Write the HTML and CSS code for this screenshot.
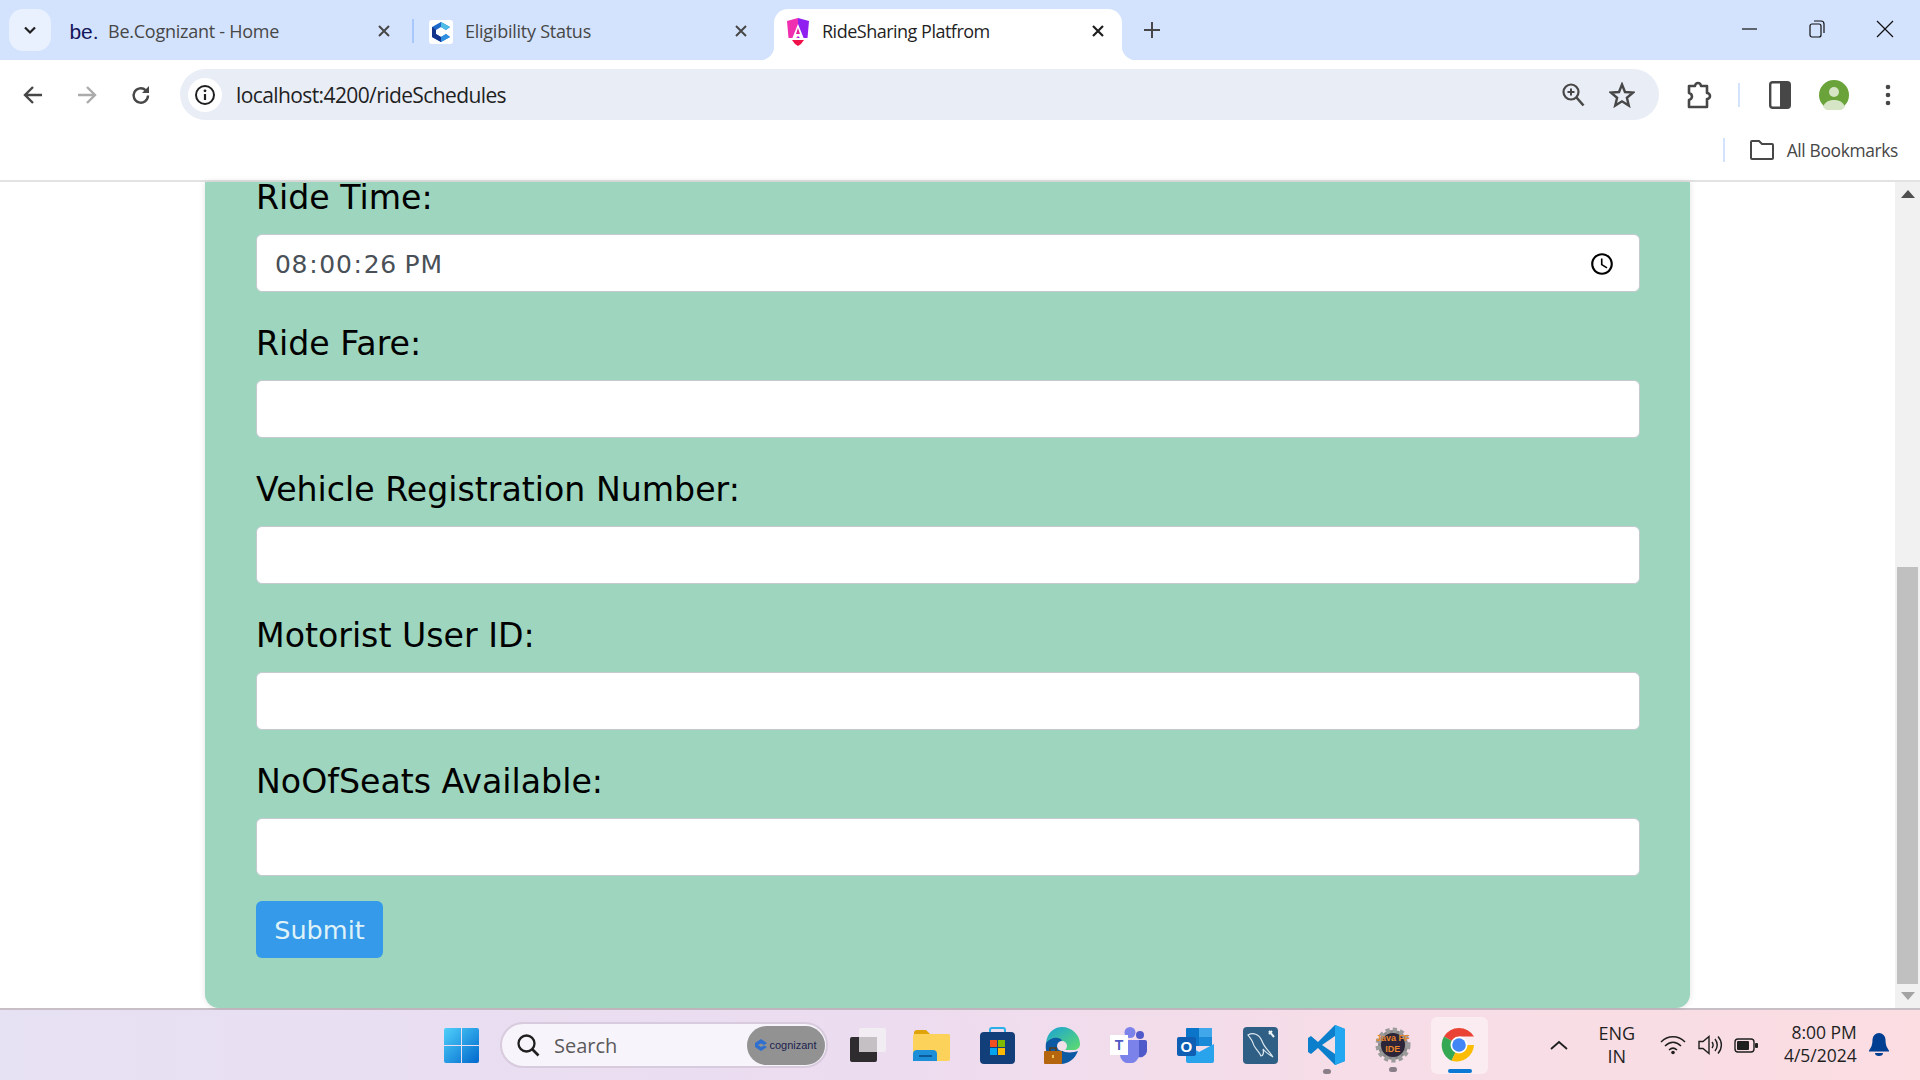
FILE: index.html
```html
<!DOCTYPE html>
<html lang="en">
<head>
    <meta charset="UTF-8">
    <title>RideSharing Platfrom</title>
    <link rel="stylesheet" href="styles.css">
</head>
<body>
<div class="tabstrip">
    <button class="tab-search"><svg width="16" height="16" viewBox="0 0 16 16"><path d="M3 5.500l5 5 5-5" fill="none" stroke="#1f1f1f" stroke-width="2.200"/></svg></button>
    <div class="tab">
        <span class="favicon be-logo">be.</span>
        <span class="tab-title">Be.Cognizant - Home</span>
        <svg class="tab-close" width="14" height="14" viewBox="0 0 14 14"><path d="M2 2l10 10M12 2L2 12" stroke="#474747" stroke-width="2"/></svg>
    </div>
    <span class="tab-sep"></span>
    <div class="tab">
        <span class="favicon">
            <svg width="24" height="24" viewBox="0 0 24 24"><rect width="24" height="24" rx="3" fill="#fff"/><path d="M12 2l9 5-4 3-5-3-5 3v4l5 3 5-3 4 3-9 5-9-5V7z" fill="#1b68c8"/><path d="M12 2l9 5-4 3-5-3z" fill="#4fbde8"/><path d="M3 7l4 3v4l5 3v5l-9-5z" fill="#14348c"/><path d="M17 14l4 3-9 5v-5z" fill="#2f8fe0"/></svg>
        </span>
        <span class="tab-title">Eligibility Status</span>
        <svg class="tab-close" width="14" height="14" viewBox="0 0 14 14"><path d="M2 2l10 10M12 2L2 12" stroke="#474747" stroke-width="2"/></svg>
    </div>
    <div class="tab tab-active">
        <span class="favicon">
            <svg width="24" height="30" viewBox="0 0 24 30"><path d="M12 1L1 4l1.500 17L12 21z" fill="#f02fb0"/><path d="M12 1l11 3-1.500 17L12 21z" fill="#8f20f0"/><path d="M12 7l-6 15h3l3-3 3 3h3z" fill="#fff"/><path d="M12 11l-2 6h4z" fill="#e8209a"/><path d="M6 23h12l-3 4-3 2-3-2z" fill="#f0104a"/></svg>
        </span>
        <span class="tab-title">RideSharing Platfrom</span>
        <svg class="tab-close" width="14" height="14" viewBox="0 0 14 14"><path d="M2 2l10 10M12 2L2 12" stroke="#1f1f1f" stroke-width="2.200"/></svg>
    </div>
    <svg class="new-tab" width="18" height="18" viewBox="0 0 18 18"><path d="M9 1v16M1 9h16" stroke="#474747" stroke-width="2"/></svg>
    <div class="win-controls">
        <svg width="18" height="18" viewBox="0 0 18 18"><path d="M2 9h15" stroke="#111" stroke-width="1.200"/></svg>
        <svg width="18" height="20" viewBox="0 0 18 20"><rect x="2" y="5" width="11" height="13" rx="2" fill="none" stroke="#111" stroke-width="1.200"/><path d="M6 2h7a3 3 0 0 1 3 3v9" fill="none" stroke="#111" stroke-width="1.200"/></svg>
        <svg width="18" height="18" viewBox="0 0 18 18"><path d="M1 1l16 16M17 1L1 17" stroke="#111" stroke-width="1.200"/></svg>
    </div>
</div>

<div class="toolbar">
    <button class="nav-btn"><svg width="22" height="22" viewBox="0 0 22 22"><path d="M20 11H4M11 3l-8 8 8 8" fill="none" stroke="#474747" stroke-width="2.400"/></svg></button>
    <button class="nav-btn"><svg width="22" height="22" viewBox="0 0 22 22"><path d="M2 11h16M11 3l8 8-8 8" fill="none" stroke="#ababab" stroke-width="2.400"/></svg></button>
    <button class="nav-btn"><svg width="22" height="22" viewBox="0 0 22 22"><path d="M18 11.500a7.200 7.200 0 1 1-2.200-5.200" fill="none" stroke="#474747" stroke-width="2.400"/><path d="M19 2v7h-7z" fill="#474747"/></svg></button>
    <div class="omnibox">
        <span class="site-info"><svg width="22" height="22" viewBox="0 0 22 22"><circle cx="11" cy="11" r="9" fill="none" stroke="#1f1f1f" stroke-width="2"/><path d="M11 10v6" stroke="#1f1f1f" stroke-width="2.200"/><circle cx="11" cy="6.800" r="1.400" fill="#1f1f1f"/></svg></span>
        <span class="url">localhost:4200/rideSchedules</span>
        <svg class="omni-icon" width="24" height="26" viewBox="0 0 24 26"><circle cx="10" cy="10" r="7.500" fill="none" stroke="#474747" stroke-width="2.200"/><path d="M15.500 15.500l7 8" stroke="#474747" stroke-width="2.600"/><path d="M10 6.500v7M6.500 10h7" stroke="#474747" stroke-width="2"/></svg>
        <svg class="omni-icon" width="26" height="26" viewBox="0 0 26 26"><path d="M13 2.500l3 7.500 8 .6-6.100 5.200 1.900 7.800L13 19.300l-6.800 4.300 1.900-7.800L2 10.600l8-.6z" fill="none" stroke="#474747" stroke-width="2.400"/></svg>
    </div>
    <svg class="ext-icon" width="26" height="30" viewBox="0 0 26 30"><path d="M3 6h6a3 3 0 0 1 6 0h6v7a3 3 0 0 1 0 6v8H3v-7a4 4 0 0 0 3-3.500A4 4 0 0 0 3 13z" fill="none" stroke="#474747" stroke-width="2.600" stroke-linejoin="round"/></svg>
    <span class="bar-sep"></span>
    <svg class="side-icon" width="22" height="28" viewBox="0 0 22 28"><rect x="1.200" y="1.200" width="19.600" height="25.600" rx="2.500" fill="#fff" stroke="#474747" stroke-width="2.400"/><path d="M11 1h8a2 2 0 0 1 2 2v22a2 2 0 0 1-2 2h-8z" fill="#474747"/></svg>
    <span class="avatar"><svg width="30" height="30" viewBox="0 0 30 30"><circle cx="15" cy="15" r="15" fill="#69a339"/><circle cx="15" cy="12" r="5" fill="#d5e5c5"/><path d="M4 27c2-6 7-7 11-7s9 1 11 7a15 15 0 0 1-22 0z" fill="#d5e5c5"/></svg></span>
    <svg class="menu-icon" width="6" height="22" viewBox="0 0 6 22"><circle cx="3" cy="3" r="2.300" fill="#474747"/><circle cx="3" cy="11" r="2.300" fill="#474747"/><circle cx="3" cy="19" r="2.300" fill="#474747"/></svg>
</div>

<div class="bookmarks">
    <span class="bar-sep"></span>
    <svg width="26" height="22" viewBox="0 0 26 22"><path d="M2 3a1 1 0 0 1 1-1h7l3 3h10a1 1 0 0 1 1 1v13a1 1 0 0 1-1 1H3a1 1 0 0 1-1-1z" fill="none" stroke="#474747" stroke-width="2"/></svg>
    <span class="bookmarks-label">All Bookmarks</span>
</div>

<div class="page">
    <div class="page-main">
        <form class="ride-form">
            <div class="field">
                <label for="rideTime">Ride Time:</label>
                <input id="rideTime" type="time" step="1" value="20:00:26">
            </div>
            <div class="field">
                <label for="rideFare">Ride Fare:</label>
                <input id="rideFare" type="text">
            </div>
            <div class="field">
                <label for="vehicleReg">Vehicle Registration Number:</label>
                <input id="vehicleReg" type="text">
            </div>
            <div class="field">
                <label for="motoristId">Motorist User ID:</label>
                <input id="motoristId" type="text">
            </div>
            <div class="field">
                <label for="seats">NoOfSeats Available:</label>
                <input id="seats" type="text">
            </div>
            <button type="button" class="submit-btn">Submit</button>
        </form>
    </div>
    <div class="scrollbar">
        <svg class="scroll-arrow" width="14" height="8" viewBox="0 0 14 8"><path d="M7 0l7 8H0z" fill="#505050"/></svg>
        <div class="scroll-track"><div class="scroll-thumb"></div></div>
        <svg class="scroll-arrow" width="14" height="8" viewBox="0 0 14 8"><path d="M0 0h14L7 8z" fill="#a3a3a3"/></svg>
    </div>
</div>

<div class="taskbar">
    <svg class="win-logo" width="35" height="35" viewBox="0 0 35 35">
        <defs><linearGradient id="winGrad" x1="0" y1="0" x2="1" y2="1"><stop offset="0" stop-color="#4fd0fb"/><stop offset="1" stop-color="#0068cc"/></linearGradient></defs>
        <path d="M2 0h15v17H0V2a2 2 0 0 1 2-2zM18 0h15a2 2 0 0 1 2 2v15H18zM0 18h17v17H2a2 2 0 0 1-2-2zM18 18h17v15a2 2 0 0 1-2 2H18z" fill="url(#winGrad)"/>
    </svg>
    <div class="search-box">
        <svg width="24" height="24" viewBox="0 0 24 24"><circle cx="10.500" cy="10.500" r="8" fill="none" stroke="#1f1f1f" stroke-width="2.300"/><path d="M16.500 16.500l6 6" stroke="#1f1f1f" stroke-width="2.600"/></svg>
        <span class="search-text">Search</span>
        <span class="search-badge">
            <svg width="12" height="12" viewBox="0 0 12 12"><path d="M6 0l6 4-3 2-3-1.500L3 6l3 2 3-1.500L12 8l-6 4-6-4V4z" fill="#2f6fd0"/></svg>
            <span class="badge-text">cognizant</span>
        </span>
    </div>
    <svg class="task-view" width="36" height="34" viewBox="0 0 36 34"><rect x="0" y="9" width="27" height="25" rx="2" fill="#2e2c2e"/><rect x="9" y="0" width="27" height="24" rx="2" fill="#f2eef2" fill-opacity=".92"/><rect x="9" y="9" width="18" height="15" fill="#c4c0c4"/></svg>
    <svg class="tb-icon tb-folder" width="37" height="32" viewBox="0 0 37 32"><path d="M1 4a3 3 0 0 1 3-3h9l4 4h17a3 3 0 0 1 3 3v3H1z" fill="#e0a30a"/><rect x="0" y="5" width="37" height="27" rx="2" fill="#fcd25a"/><path d="M0 32V25a4 4 0 0 1 4-4h16a4 4 0 0 1 4 4v7z" fill="#1d8fd8"/><rect x="6" y="26" width="13" height="2" fill="#0d5a99"/></svg>
    <svg class="tb-icon" width="35" height="37" viewBox="0 0 35 37"><path d="M10 6V3a2 2 0 0 1 2-2h11a2 2 0 0 1 2 2v3" fill="none" stroke="#29b0e8" stroke-width="2"/><rect x="0" y="5" width="35" height="32" rx="4" fill="#123f7a"/><rect x="10" y="13" width="7" height="7" fill="#f25022"/><rect x="18" y="13" width="7" height="7" fill="#7fba00"/><rect x="10" y="21" width="7" height="7" fill="#00a4ef"/><rect x="18" y="21" width="7" height="7" fill="#ffb900"/></svg>
    <svg class="tb-icon" width="36" height="37" viewBox="0 0 36 37">
        <defs><linearGradient id="edgeGrad" x1="0" y1="0" x2="1" y2="1"><stop offset="0" stop-color="#1aa1d8"/><stop offset="1" stop-color="#5edc6c"/></linearGradient></defs>
        <path d="M2 16C3 6 10 0 18 0c10 0 18 8 18 17 0 4-3 6-7 6h-8c1-4-1-9-6-9-6 0-11 1-13 2z" fill="url(#edgeGrad)"/>
        <path d="M2 16c3-4 8-6 12-5 5 1 4 3 2 6-1 3 1 7 5 8 5 1 10 0 13-1-3 8-10 13-17 13S0 30 2 16z" fill="#0c59a4"/>
        <circle cx="18" cy="19" r="5" fill="#f3dfe8"/>
        <rect x="0" y="24" width="18" height="13" rx="1" fill="#b5650e"/><path d="M6 24v-3h6v3" fill="none" stroke="#5a3a10" stroke-width="1.500"/><rect x="8" y="28" width="2" height="3" fill="#f0c050"/>
    </svg>
    <svg class="tb-icon" width="37" height="36" viewBox="0 0 37 36"><circle cx="20" cy="5.500" r="5.500" fill="#7b83eb"/><circle cx="30" cy="8" r="4" fill="#5059c9"/><path d="M26 13h9a2 2 0 0 1 2 2v9a7 7 0 0 1-11 5z" fill="#5059c9"/><path d="M10 13h19v15a9 8 0 0 1-19 0z" fill="#7b83eb"/></svg>
    <span class="teams-t">T</span>
    <svg class="tb-icon" width="37" height="36" viewBox="0 0 37 36"><rect x="9" y="1" width="26" height="18" rx="1" fill="#0a75c9"/><rect x="22" y="1" width="13" height="9" fill="#40a8ea"/><rect x="22" y="10" width="13" height="9" fill="#1a8ad8"/><path d="M9 17l13 8 15-8v17a2 2 0 0 1-2 2H11a2 2 0 0 1-2-2z" fill="#29a3ec"/><rect x="0" y="10" width="19" height="19" rx="2" fill="#0e5fb4"/></svg>
    <span class="outlook-o">O</span>
    <svg class="tb-icon" width="35" height="37" viewBox="0 0 35 37"><rect width="35" height="37" rx="4" fill="#2f5f85"/><path d="M5 8c5-3 11-1 14 6 2 6 6 9 11 16-5-3-8-5-10-8 1 4 0 7-2 7-2-5-7-8-8-13-1-3-3-5-5-8z" fill="none" stroke="#dce8ef" stroke-width="1.200"/><path d="M26 4l5 6M29 4l-3 3" stroke="#eaf2f6" stroke-width="2"/></svg>
    <span class="tb-icon running">
        <svg width="37" height="40" viewBox="0 0 37 40"><path d="M27 0L10 17 3 11 0 13v14l3 2 7-6 17 17 10-4V4z" fill="#0b7fcc"/><path d="M27 0l10 4v32l-10 4z" fill="#22a7f0"/><path d="M27 11L14 20l13 9z" fill="#f3dfe6"/></svg>
    </span>
    <span class="java-ide tb-icon running">
        <svg width="36" height="36" viewBox="0 0 36 36"><circle cx="18" cy="18" r="15" fill="#8a8a8a" stroke="#9b9b9b" stroke-width="5" stroke-dasharray="4 3"/><circle cx="18" cy="18" r="12" fill="#2c2438"/></svg>
        <span class="java-label">Java FF<br>IDE</span>
    </span>
    <span class="chrome-tile">
        <svg width="36" height="36" viewBox="0 0 36 36">
            <path d="M18 18L3 9.500A17.500 17.500 0 0 1 33 9.500H18z" fill="#ea4335"/>
            <path d="M18 18l-7.500 15.800A17.500 17.500 0 0 1 3 9.500z" fill="#34a853"/>
            <path d="M18 18h15a17.500 17.500 0 0 1-22.500 15.800z" fill="#fbbc04"/>
            <circle cx="18" cy="18" r="8.500" fill="#fff"/><circle cx="18" cy="18" r="6.800" fill="#4285f4"/>
        </svg>
    </span>
    <div class="tray">
        <svg width="18" height="10" viewBox="0 0 18 10"><path d="M1 9l8-7 8 7" fill="none" stroke="#1f1f1f" stroke-width="1.800"/></svg>
        <span class="lang">ENG<br>IN</span>
        <svg class="tray-wifi" width="26" height="20" viewBox="0 0 26 20"><path d="M1 7c7-7 17-7 24 0M5 11c5-5 11-5 16 0M9 15c2.500-2.500 5.500-2.500 8 0" fill="none" stroke="#1f1f1f" stroke-width="1.500"/><circle cx="13" cy="17.500" r="1.800" fill="#1f1f1f"/></svg>
        <svg class="tray-sound" width="25" height="22" viewBox="0 0 25 22"><path d="M1 7.500h4l6-5v17l-6-5H1z" fill="none" stroke="#1f1f1f" stroke-width="1.400"/><path d="M14 8c1.500 2 1.500 4 0 6M17 5c3 4 3 8 0 12M20 2.500c4.500 5 4.500 12 0 17" fill="none" stroke="#1f1f1f" stroke-width="1.400"/></svg>
        <svg class="tray-battery" width="24" height="15" viewBox="0 0 24 15"><rect x="1" y="1" width="19" height="13" rx="3" fill="none" stroke="#1f1f1f" stroke-width="1.400"/><rect x="3" y="3" width="12" height="9" rx="1" fill="#1f1f1f"/><rect x="21" y="5" width="3" height="5" rx="1" fill="#1f1f1f"/></svg>
        <span class="clock">8:00 PM<br>4/5/2024</span>
        <svg class="tray-bell" width="20" height="24" viewBox="0 0 20 24"><path d="M10 0a6.500 6.500 0 0 1 6.500 6.500c0 6 1.500 8 3.500 11v1H0v-1c2-3 3.500-5 3.500-11A6.500 6.500 0 0 1 10 0z" fill="#003e92"/><path d="M6 20h8a4 3 0 0 1-8 0z" fill="#003e92"/></svg>
    </div>
</div>
</body>
</html>
```

FILE: styles.css
```css
* { box-sizing: border-box; }
html, body { margin: 0; height: 100%; overflow: hidden; }
body { display: flex; flex-direction: column; width: 1920px; height: 1080px; background: #fff; font-family: "Open Sans", "Noto Sans", sans-serif; }
button { border: 0; background: none; padding: 0; font-family: inherit; }
svg { display: block; flex: none; }

/* browser tabs */
.tabstrip { display: flex; align-items: flex-start; height: 60px; background: #d3e3fd; padding-left: 9px; }
.tab-search { display: flex; align-items: center; justify-content: center; width: 42px; height: 42px; margin: 9px 9px 0 0; border-radius: 14px; background: #e9f0fe; }
.tab { position: relative; display: flex; align-items: center; width: 348px; height: 51px; margin-top: 9px; padding: 0 17px 0 12px; }
.tab-active { background: #fff; border-radius: 14px 14px 0 0; margin-left: 9px; }
.tab-active::before, .tab-active::after { content: ""; position: absolute; bottom: 0; width: 14px; height: 14px; }
.tab-active::before { left: -14px; background: radial-gradient(circle at 0 0, #d3e3fd 14px, #fff 14.5px); }
.tab-active::after { right: -14px; background: radial-gradient(circle at 100% 0, #d3e3fd 14px, #fff 14.5px); }
.favicon { display: flex; align-items: center; justify-content: center; width: 24px; height: 30px; margin-top: -6px; flex: none; }
.be-logo { font: 21px "Liberation Sans", sans-serif; color: #14145a; }
.tab-title { flex: 1; margin: -7px 0 0 12px; font-size: 18px; line-height: 26px; color: #474747; white-space: nowrap; letter-spacing: -0.25px; }
.tab-active .tab-title { color: #1f1f1f; letter-spacing: -0.5px; }
.tab-close { margin-top: -8px; }
.tab-sep { width: 2px; height: 24px; margin: 19px 3px 0 4px; background: #a8c7fa; }
.new-tab { margin: 21px 0 0 21px; }
.win-controls { display: flex; align-items: center; gap: 50px; margin: 19px 0 0 auto; padding-right: 26px; }

/* address bar */
.toolbar { display: flex; align-items: center; height: 69px; padding-left: 6px; background: #fff; border-radius: 14px 14px 0 0; }
.nav-btn { display: flex; align-items: center; justify-content: center; width: 54px; height: 42px; }
.omnibox { display: flex; align-items: center; width: 1479px; height: 51px; margin-left: 12px; padding: 0 24px 0 8px; border-radius: 26px; background: #e9edf6; }
.site-info { display: flex; align-items: center; justify-content: center; width: 34px; height: 34px; border-radius: 50%; background: #fff; }
.url { flex: 1; margin-left: 14px; font-size: 21px; letter-spacing: -0.6px; color: #1f1f1f; }
.omni-icon + .omni-icon { margin-left: 24px; }
.ext-icon { margin-left: 27px; }
.bar-sep { width: 2px; height: 24px; background: #d3e3fd; flex: none; }
.toolbar .bar-sep { margin-left: 26px; }
.side-icon { margin-left: 29px; }
.avatar { margin-left: 28px; }
.menu-icon { margin-left: 36px; }

.bookmarks { display: flex; align-items: center; justify-content: flex-end; height: 51px; padding: 0 22px 10px 0; background: #fff; }
.bookmarks .bar-sep { margin-right: 24px; }
.bookmarks-label { margin-left: 12px; font-size: 17.400px; letter-spacing: -0.35px; color: #474747; }

/* page content */
.page { display: flex; height: 830px; border-top: 2px solid #e2e2e2; border-bottom: 2px solid #c8bfc6; }
.page-main { flex: 1; padding: 0 205px; }
.ride-form { height: 826px; width: 1485px; padding: 0 50px 0 51px; background: #9dd5bf; border-radius: 0 0 14px 14px; box-shadow: 0 0 6px rgba(0, 0, 0, 0.12); font-family: "DejaVu Sans", Verdana, sans-serif; }
.field { margin-bottom: 24px; }
.field label { display: block; height: 52px; margin-bottom: 12px; font-size: 33.2px; line-height: 56px; color: #000; }
.field:first-child label { height: 40px; line-height: 32px; }
.field input { display: block; width: 100%; height: 58px; padding: 0 18px; border: 1.500px solid #c4cad0; border-radius: 6px; background: #fff; font: 25px "DejaVu Sans", Verdana, sans-serif; color: #495057; outline: 0; }
.field input[type="time"] { padding: 2px 18px 0 17px; letter-spacing: 0.7px; }
.field input::-webkit-calendar-picker-indicator { width: 26px; height: 26px; margin-right: 6px; padding: 0; }
.submit-btn { display: block; width: 127px; height: 57px; margin-top: 25px; border-radius: 6px; background: #369aea; color: #dff2f7; font: 25.500px "DejaVu Sans", Verdana, sans-serif; }

.scrollbar { display: flex; flex-direction: column; align-items: center; width: 25px; background: #f1f1f1; }
.scroll-arrow { margin: 8px 0; }
.scroll-track { flex: 1; width: 21px; display: flex; align-items: flex-end; }
.scroll-thumb { width: 100%; height: 417px; background: #c0c0c0; }

/* windows taskbar */
.taskbar { display: flex; align-items: center; flex: 1; padding-left: 444px; background: linear-gradient(90deg, #e6e1f3 0%, #ecdcf0 45%, #f6dde7 70%, #fbdde2 100%); }
.win-logo { margin-right: 21px; }
.search-box { display: flex; align-items: center; width: 328px; height: 46px; padding: 0 1px 0 14px; border-radius: 23px; border: 2px solid #d8cbdd; background: #f8f4fb; }
.search-text { flex: 1; margin-left: 14px; font-size: 20px; color: #5a5a5a; }
.search-badge { display: flex; align-items: center; justify-content: center; gap: 2px; width: 78px; height: 39px; border-radius: 20px; background: #929292; }
.badge-text { font: 11px "Liberation Sans", sans-serif; color: #1c2250; }
.task-view { margin-left: 22px; }
.tb-icon { margin-left: 29.700px; }
.tb-icon.tb-folder { margin-left: 27px; }
.teams-t { display: flex; align-items: center; justify-content: center; width: 18px; height: 20px; margin: 0 19px 0 -37px; background: #fff; color: #4f58c5; font: bold 14px "Liberation Sans", sans-serif; position: relative; }
.outlook-o { display: flex; align-items: center; justify-content: center; width: 19px; height: 19px; margin: 3px 18px 0 -37px; color: #fff; font: bold 15px "Liberation Sans", sans-serif; position: relative; }
.running { position: relative; display: block; }
.running::after { content: ""; position: absolute; left: 50%; bottom: -9px; width: 8px; height: 5px; margin-left: -4px; border-radius: 3px; background: #8a7f88; }
.java-ide { width: 36px; height: 36px; }
.java-label { position: absolute; top: 6px; left: 0; width: 36px; text-align: center; font: bold 9px/11px "Liberation Sans", sans-serif; color: #e8862a; }
.chrome-tile { position: relative; display: flex; align-items: center; justify-content: center; width: 57px; height: 57px; margin-left: 20px; border-radius: 6px; background: #faecf0; }
.chrome-tile::after { content: ""; position: absolute; bottom: 1px; left: 17px; width: 24px; height: 4px; border-radius: 2px; background: #0a78d4; }
.tray { display: flex; align-items: center; margin-left: 62px; font-family: "Open Sans", sans-serif; color: #1f1f1f; }
.lang { width: 60px; margin-left: 19px; text-align: center; font-size: 18px; line-height: 23px; }
.tray-wifi { margin-left: 13px; }
.tray-sound { margin-left: 12px; }
.tray-battery { margin-left: 11px; }
.clock { width: 100px; margin: -2px 0 0 -1px; text-align: right; font-size: 17.500px; line-height: 23px; }
.tray-bell { margin-left: 12px; }
```
